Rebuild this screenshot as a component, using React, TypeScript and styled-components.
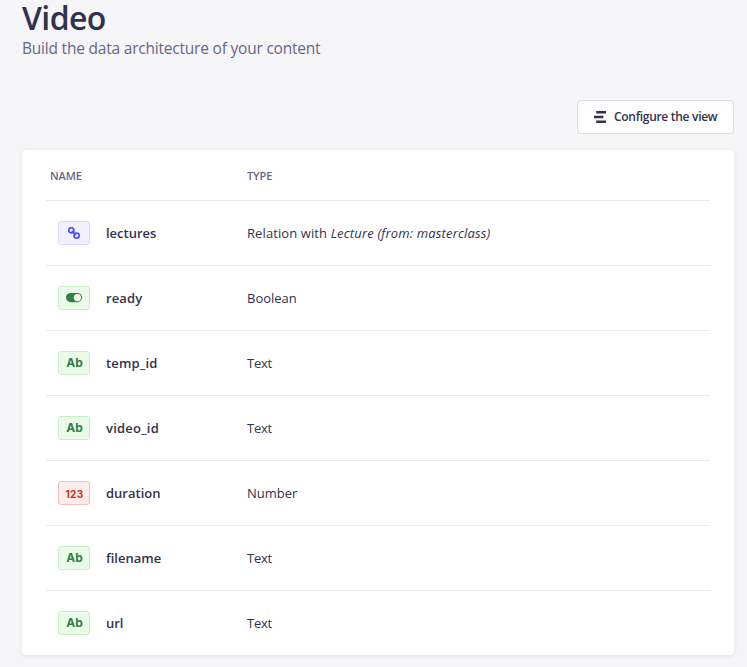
import React from "react";
import styled, { createGlobalStyle, css } from "styled-components";

const GlobalStyle = createGlobalStyle`
  *, *::before, *::after { box-sizing: border-box; }
  body {
    margin: 0;
    background: #f6f6f9;
    color: #32324d;
    font-family: "Open Sans", "Noto Sans", sans-serif;
  }
`;

const Page = styled.main`
  display: flex;
  flex-direction: column;
  height: 667px;
  padding: 0 13px 12px 22px;
  background: #f6f6f9;
`;

const Header = styled.header`
  height: 100px;
  white-space: nowrap;
`;

const Title = styled.h1`
  margin: 0;
  font-size: 32px;
  line-height: 36px;
  font-weight: 600;
  letter-spacing: -0.6px;
`;

const Subtitle = styled.p`
  margin: 0;
  font-size: 15.5px;
  line-height: 25px;
  color: #666687;
  letter-spacing: -0.21px;
`;

const Toolbar = styled.div`
  display: flex;
  justify-content: flex-end;
  margin-bottom: 16px;
`;

const Button = styled.button`
  display: flex;
  align-items: center;
  gap: 8px;
  width: 157px;
  height: 34px;
  padding: 0 0 0 16px;
  background: #ffffff;
  border: 1px solid #dcdce4;
  border-radius: 4px;
  color: #32324d;
  font: 600 12px/16px "Open Sans", "Noto Sans", sans-serif;
  letter-spacing: -0.29px;
  white-space: nowrap;
`;

const Card = styled.section`
  height: 505px;
  padding: 0 24px;
  background: #ffffff;
  border-radius: 4px;
  box-shadow: 0 1px 4px rgba(33, 33, 52, 0.1);
`;

const columns = css`
  display: grid;
  grid-template-columns: 201px 1fr;
  align-items: center;
  white-space: nowrap;
`;

const HeadRow = styled.div`
  ${columns}
  height: 51px;
  border-bottom: 1px solid #eaeaea;
`;

const HeadCell = styled.span`
  padding: 1px 0 0 4px;
  font-size: 11px;
  line-height: 16px;
  font-weight: 600;
  color: #666687;
  letter-spacing: -0.1px;
  &:last-child { padding-left: 0; }
`;

const Row = styled.div`
  ${columns}
  height: 65px;
  border-bottom: 1px solid #eaeaea;
  &:last-child { border-bottom: 0; height: 64px; }
`;

const NameCell = styled.div`
  display: flex;
  align-items: center;
  gap: 16px;
  padding-left: 12px;
`;

const Name = styled.span<{ $track?: number }>`
  font-size: 13px;
  line-height: 20px;
  font-weight: 600;
  letter-spacing: ${(p) => p.$track ?? 0}px;
`;

const Type = styled.span<{ $track?: number }>`
  font-size: 13px;
  line-height: 20px;
  letter-spacing: ${(p) => p.$track ?? 0}px;
  em { letter-spacing: 0.17px; }
`;

type Kind = "relation" | "boolean" | "text" | "number";

const palette: Record<Kind, [string, string, string]> = {
  relation: ["#f0f0ff", "#d9d8ff", "#4945ff"],
  boolean: ["#eafbe7", "#c6f0c2", "#328048"],
  text: ["#eafbe7", "#c6f0c2", "#328048"],
  number: ["#fcecea", "#f5c0b8", "#d02b20"],
};

const Badge = styled.span<{ $kind: Kind }>`
  display: flex;
  align-items: center;
  justify-content: center;
  width: 32px;
  height: 24px;
  border-radius: 3px;
  background: ${(p) => palette[p.$kind][0]};
  border: 1px solid ${(p) => palette[p.$kind][1]};
  color: ${(p) => palette[p.$kind][2]};
  font-family: Inter, sans-serif;
  font-weight: 700;
  line-height: 22px;
  font-size: 12px;
  ${(p) => p.$kind === "text" && css`padding-left: 1px;`}
  ${(p) => p.$kind === "number" && css`
    padding: 1px 0 0 1px;
    font-size: 10px;
    letter-spacing: 0.35px;
  `}
`;

const ConfigureIcon = () => (
  <svg width="12" height="12" viewBox="0 0 12 12" fill="#32324d" aria-hidden="true">
    <path d="M2.2 0H12v2.5H2.2zM0 4.75h9.4v2.5H0zM2.2 9.5H12V12H2.2z" />
  </svg>
);

const LinkIcon = () => (
  <svg width="12" height="12" viewBox="0 0 12 12" fill="none" stroke="currentColor" strokeWidth="1.6" aria-hidden="true">
    <circle cx="3.3" cy="3.3" r="2.6" />
    <circle cx="8.6" cy="8.6" r="2.6" />
    <path d="M4 4l4 4" />
  </svg>
);

const ToggleIcon = () => (
  <svg width="16" height="10" viewBox="0 0 16 10" aria-hidden="true">
    <rect width="16" height="9.2" rx="4.6" fill="currentColor" />
    <circle cx="11.4" cy="4.6" r="3.7" fill="#eafbe7" />
  </svg>
);

const FieldBadge = ({ kind }: { kind: Kind }) => (
  <Badge $kind={kind}>
    {kind === "relation" && <LinkIcon />}
    {kind === "boolean" && <ToggleIcon />}
    {kind === "text" && "Ab"}
    {kind === "number" && "123"}
  </Badge>
);

interface Field {
  name: string;
  kind: Kind;
  type: React.ReactNode;
  track?: number;
  typeTrack?: number;
}

const fields: Field[] = [
  { name: "lectures", kind: "relation", type: <>Relation with <em>Lecture (from: masterclass)</em></>, typeTrack: 0.1 },
  { name: "ready", kind: "boolean", type: "Boolean", track: 0.1 },
  { name: "temp_id", kind: "text", type: "Text", track: 0.17, typeTrack: -0.25 },
  { name: "video_id", kind: "text", type: "Text", track: 0.2, typeTrack: -0.25 },
  { name: "duration", kind: "number", type: "Number" },
  { name: "filename", kind: "text", type: "Text", typeTrack: -0.25 },
  { name: "url", kind: "text", type: "Text", typeTrack: -0.25 },
];

export default function App() {
  return (
    <>
      <GlobalStyle />
      <Page>
        <Header>
          <Title>Video</Title>
          <Subtitle>Build the data architecture of your content</Subtitle>
        </Header>
        <Toolbar>
          <Button type="button">
            <ConfigureIcon />
            Configure the view
          </Button>
        </Toolbar>
        <Card>
          <HeadRow>
            <HeadCell>NAME</HeadCell>
            <HeadCell>TYPE</HeadCell>
          </HeadRow>
          {fields.map((f) => (
            <Row key={f.name}>
              <NameCell>
                <FieldBadge kind={f.kind} />
                <Name $track={f.track}>{f.name}</Name>
              </NameCell>
              <Type $track={f.typeTrack}>{f.type}</Type>
            </Row>
          ))}
        </Card>
      </Page>
    </>
  );
}
